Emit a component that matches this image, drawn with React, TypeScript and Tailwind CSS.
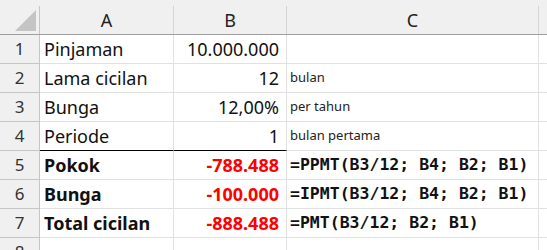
const rows = [
  { n: "1", a: "Pinjaman", b: "10.000.000", c: "", kind: "plain" },
  { n: "2", a: "Lama cicilan", b: "12", c: "bulan", kind: "plain" },
  { n: "3", a: "Bunga", b: "12,00%", c: "per tahun", kind: "plain" },
  { n: "4", a: "Periode", b: "1", c: "bulan pertama", kind: "underline" },
  { n: "5", a: "Pokok", b: "-788.488", c: "=PPMT(B3/12; B4; B2; B1)", kind: "result" },
  { n: "6", a: "Bunga", b: "-100.000", c: "=IPMT(B3/12; B4; B2; B1)", kind: "result" },
  { n: "7", a: "Total cicilan", b: "-888.488", c: "=PMT(B3/12; B2; B1)", kind: "result" },
  { n: "8", a: "", b: "", c: "", kind: "plain" },
];

function Corner() {
  return (
    <div className="w-[40px] h-[28px] border-r border-[#c6c6c6] flex items-end justify-end pr-[3px] pb-[3px]">
      <svg width="21" height="21" viewBox="0 0 21 21">
        <polygon points="21,0 21,21 0,21" fill="#c4c4c4" />
      </svg>
    </div>
  );
}

export default function App() {
  return (
    <div
      className="w-[547px] h-[250px] overflow-hidden bg-white text-[#111]"
      style={{ fontFamily: '"Noto Sans", "Open Sans", sans-serif' }}
    >
      {/* column headers */}
      <div className="flex h-[35px] bg-[#f0f0f0] pt-[6px] border-b border-[#9e9e9e]">
        <Corner />
        <div className="w-[134px] h-[28px] border-r border-[#d4d4d4] flex items-center justify-center text-[18px] text-[#222]">
          A
        </div>
        <div className="w-[113px] h-[28px] border-r border-[#d4d4d4] flex items-center justify-center text-[18px] text-[#222]">
          B
        </div>
        <div className="w-[252px] h-[28px] border-r border-[#d4d4d4] flex items-center justify-center text-[18px] text-[#222]">
          C
        </div>
        <div className="flex-1" />
      </div>

      {rows.map((r) => {
        const under = r.kind === "underline";
        const result = r.kind === "result";
        return (
          <div key={r.n} className="flex h-[29px]">
            <div className="w-[40px] shrink-0 bg-[#f0f0f0] border-r border-b border-[#c6c6c6] flex items-center justify-center text-[17px] text-[#333]">
              {r.n}
            </div>
            <div
              className={`w-[134px] shrink-0 border-r border-[#e1e1e1] flex items-center pl-[4px] text-[18px] whitespace-nowrap ${
                under ? "border-b border-b-black" : "border-b border-b-[#e1e1e1]"
              } ${result ? "font-bold" : ""}`}
            >
              {r.a}
            </div>
            <div
              className={`w-[113px] shrink-0 border-r border-[#e1e1e1] flex items-center justify-end pr-[7px] text-[18px] whitespace-nowrap ${
                under ? "border-b border-b-black" : "border-b border-b-[#e1e1e1]"
              } ${result ? "font-bold text-[#ff0000]" : ""}`}
            >
              {r.b}
            </div>
            <div className="w-[252px] shrink-0 border-r border-b border-[#e1e1e1] flex items-center pl-[3px] whitespace-nowrap">
              {result ? (
                <span
                  className="font-bold text-[16.5px] text-[#111]"
                  style={{ fontFamily: '"DejaVu Sans Mono", "Liberation Mono", monospace' }}
                >
                  {r.c}
                </span>
              ) : (
                <span className="text-[13px] text-[#222]">{r.c}</span>
              )}
            </div>
            <div className="flex-1 border-b border-[#e1e1e1]" />
          </div>
        );
      })}
    </div>
  );
}
